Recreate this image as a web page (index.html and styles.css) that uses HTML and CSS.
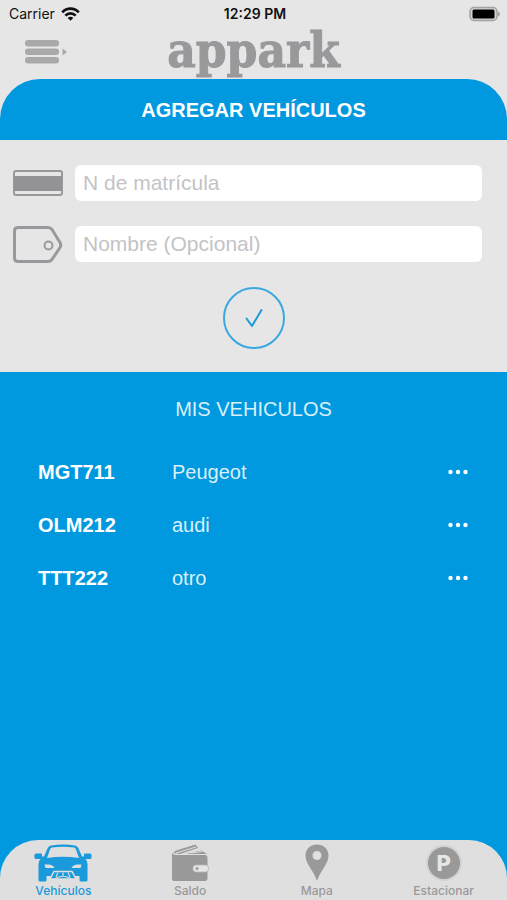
FILE: index.html
```html
<!DOCTYPE html>
<html lang="es">
<head>
  <meta charset="UTF-8" />
  <meta name="viewport" content="width=device-width, initial-scale=1" />
  <title>appark - Vehículos</title>
  <link rel="stylesheet" href="styles.css">
</head>
<body>
  <!-- Status bar -->
  <div class="status-bar">
    <div class="carrier">
      <span>Carrier</span>
      <svg width="19" height="14" viewBox="0 0 19 14" fill="none" stroke="#111" stroke-width="2.6">
        <path d="M1.2 5.3C6 .4 13 .4 17.8 5.3" />
        <path d="M4.3 8.6C7.3 5.6 11.7 5.6 14.7 8.6" />
        <path d="M9.5 13.8L6.7 11C8.3 9.4 10.7 9.4 12.3 11Z" fill="#111" stroke="none" />
      </svg>
    </div>
    <div class="time">12:29 PM</div>
    <div class="battery">
      <svg width="32" height="16" viewBox="0 0 32 16">
        <rect x="1" y="1.5" width="27" height="13" rx="4" fill="#d2d2d2" stroke="#a2a2a2" stroke-width="1.5" />
        <rect x="3.5" y="3.5" width="22" height="9" rx="1.5" fill="#000" />
        <path d="M29 5.5C31.6 6.5 31.6 9.5 29 10.5Z" fill="#a2a2a2" />
      </svg>
    </div>
  </div>

  <header class="nav">
    <button type="button" class="menu-btn" aria-label="Menú">
      <svg width="43" height="26" viewBox="0 0 43 26" fill="#a9a9a9">
        <rect x="0" y="1" width="34" height="6.5" rx="3" />
        <rect x="0" y="9.5" width="34" height="6.5" rx="3" />
        <rect x="0" y="18" width="34" height="6.5" rx="3" />
        <path d="M37.5 9.5L42 13L37.5 16.5Z" />
      </svg>
    </button>
    <h1 class="logo">appark</h1>
  </header>

  <main>
    <h2 class="title">AGREGAR VEHÍCULOS</h2>

    <!-- Add vehicle form -->
    <form class="add-form">
      <div class="field">
        <label for="plate" aria-label="N de matrícula">
          <svg width="50" height="38" viewBox="0 0 50 38">
            <rect x="1" y="7" width="48" height="24" rx="2" fill="#e6e6e6" stroke="#99999d" stroke-width="2" />
            <rect x="1" y="12" width="48" height="15" fill="#929297" />
          </svg>
        </label>
        <input type="text" id="plate" placeholder="N de matrícula" />
      </div>
      <div class="field">
        <label for="name" aria-label="Nombre">
          <svg width="50" height="38" viewBox="0 0 50 38" fill="none" stroke="#99999d">
            <path d="M5 2.5H35Q37.5 2.5 39 4.5L47 17.500Q48.5 20 47 22.500L39 34.500Q37.5 36.500 35 36.500H5Q1.5 36.500 1.5 33V6Q1.5 2.500 5 2.500Z" stroke-width="3" />
            <circle cx="35.5" cy="20.5" r="4" stroke-width="2" />
          </svg>
        </label>
        <input type="text" id="name" placeholder="Nombre (Opcional)" />
      </div>
      <button type="submit" class="confirm-btn" aria-label="Agregar">
        <svg width="18" height="20" viewBox="0 0 18 20" fill="none" stroke="#1a9bdc" stroke-width="2" stroke-linecap="round" stroke-linejoin="round">
          <path d="M1.5 10.5L7 18L16.5 2" />
        </svg>
      </button>
    </form>

    <!-- Vehicle list -->
    <section class="vehicles">
      <h2>MIS VEHICULOS</h2>
      <table>
        <tr>
          <th scope="row">MGT711</th>
          <td>Peugeot</td>
          <td class="actions">
            <button type="button" aria-label="Opciones MGT711">
              <svg width="20" height="6" viewBox="0 0 20 6" fill="#fff"><circle cx="2.5" cy="3" r="2.2" /><circle cx="10" cy="3" r="2.2" /><circle cx="17.5" cy="3" r="2.2" /></svg>
            </button>
          </td>
        </tr>
        <tr>
          <th scope="row">OLM212</th>
          <td>audi</td>
          <td class="actions">
            <button type="button" aria-label="Opciones OLM212">
              <svg width="20" height="6" viewBox="0 0 20 6" fill="#fff"><circle cx="2.5" cy="3" r="2.2" /><circle cx="10" cy="3" r="2.2" /><circle cx="17.5" cy="3" r="2.2" /></svg>
            </button>
          </td>
        </tr>
        <tr>
          <th scope="row">TTT222</th>
          <td>otro</td>
          <td class="actions">
            <button type="button" aria-label="Opciones TTT222">
              <svg width="20" height="6" viewBox="0 0 20 6" fill="#fff"><circle cx="2.5" cy="3" r="2.2" /><circle cx="10" cy="3" r="2.2" /><circle cx="17.5" cy="3" r="2.2" /></svg>
            </button>
          </td>
        </tr>
      </table>
    </section>
  </main>

  <!-- Bottom tabs -->
  <nav class="tabs">
    <a href="#vehiculos" class="active">
      <svg width="58" height="38" viewBox="0 0 58 38" fill="currentColor">
        <path fill-rule="evenodd" d="M17 1.5Q29 -.5 41 1.5Q43.5 2 44.5 4.5L48 12.5H50V10.5Q50 9.5 51 9.5H56Q57.5 9.5 57.5 11V13.5Q57.5 15 56 15H51.5Q53.5 17 53.5 20V36Q53.5 37.5 52 37.5H47Q45.5 37.5 45.5 36V32H12.5V36Q12.5 37.5 11 37.5H6Q4.5 37.5 4.5 36V20Q4.5 17 6.5 15H2Q.5 15 .5 13.5V11Q.5 9.5 2 9.5H7Q8 9.5 8 10.5V12.5H10L13.5 4.5Q14.5 2 17 1.5ZM18 3.5Q16.5 4 16 5.5L13 14Q29 11.5 45 14L42 5.5Q41.5 4 40 3.5Q29 2 18 3.5ZM10.5 20.5L11.5 24H20.5Q19.5 21 15 20.5ZM47.5 20.5L46.5 24H37.5Q38.5 21 43 20.5Z" />
        <path d="M16 35L20 27.5H38L42 35Z" stroke="#dfdfdf" stroke-width="1.5" />
        <path d="M24 28.5L22 33M29 28.5V32M34 28.5L36 33M20 35.5Q29 29 38 35.5" fill="none" stroke="#dfdfdf" stroke-width="1.2" />
      </svg>
      Vehículos
    </a>
    <a href="#saldo">
      <svg width="38" height="38" viewBox="0 0 38 38" fill="currentColor">
        <path d="M2 9L5 6.5L24.5 .5L27 4L9 10Z" />
        <path d="M5 9L25 3" stroke="#dfdfdf" stroke-width="1" />
        <path d="M15 10L30 6.5L36 10Z" />
        <path d="M20 9L31 7.5" stroke="#dfdfdf" stroke-width="1" />
        <path d="M1 9Q2 11 5 11H34Q36.5 11 36.5 14V34Q36.5 37 34 37H3Q1 37 1 35Z" />
        <rect x="22" y="21" width="15.5" height="7" rx="3" fill="#e5e5e5" stroke="#b8b8b8" stroke-width=".8" />
        <circle cx="26" cy="24.5" r="1.5" />
      </svg>
      Saldo
    </a>
    <a href="#mapa">
      <svg width="24" height="38" viewBox="0 0 24 38" fill="currentColor">
        <path fill-rule="evenodd" d="M12 .5C5.5 .5 .5 5 .5 11.5C.5 20 9 27 12 37C15 27 23.5 20 23.5 11.5C23.5 5 18.5 .5 12 .5ZM12 7A4.5 4.5 0 1 1 12 16A4.5 4.5 0 1 1 12 7Z" />
      </svg>
      Mapa
    </a>
    <a href="#estacionar">
      <span class="parking">P</span>
      Estacionar
    </a>
  </nav>
</body>
</html>
```
FILE: styles.css
```css
* {
  margin: 0;
  padding: 0;
  box-sizing: border-box;
}

body {
  background-color: #e6e6e6;
  display: flex;
  flex-direction: column;
  min-height: 100vh;
  font-family: "Liberation Sans", Arial, sans-serif;
}

svg {
  display: block;
}

button {
  border: none;
  background: none;
  cursor: pointer;
}

.status-bar {
  display: grid;
  grid-template-columns: 1fr auto 1fr;
  align-items: center;
  height: 27px;
  padding: 0 6px 0 9px;
  font-family: Inter, sans-serif;
  font-size: 14px;
  color: #111;
}

.carrier {
  display: flex;
  align-items: center;
  gap: 6px;
}

.time {
  font-weight: 600;
}

.battery {
  justify-self: end;
}

.nav {
  display: grid;
  grid-template-columns: 1fr auto 1fr;
  align-items: center;
  height: 52px;
  padding: 0 25px 2px;
}

.menu-btn {
  justify-self: start;
}

.logo {
  margin-bottom: 4px;
  font-family: "DejaVu Serif Condensed", "DejaVu Serif", serif;
  font-size: 49px;
  line-height: 46px;
  font-weight: bold;
  color: #99999c;
  -webkit-text-stroke: 1px #99999c;
}

main {
  flex: 1;
  display: flex;
  flex-direction: column;
}

.title {
  background-color: #0098df;
  color: white;
  border-radius: 40px 40px 0 0;
  padding: 21px 20px 19px;
  font-size: 20px;
  line-height: 21px;
  text-align: center;
}

/* Add vehicle form */
.add-form {
  display: flex;
  flex-direction: column;
  gap: 25px;
  padding: 25px 25px 23px 13px;
}

.field {
  display: flex;
  align-items: center;
  gap: 12px;
  height: 36px;
}

.field input {
  flex: 1;
  min-width: 0;
  height: 36px;
  padding: 0 8px;
  border: none;
  border-radius: 6px;
  background-color: white;
  font-family: inherit;
  font-size: 21px;
  color: #333;
}

.field input::placeholder {
  color: #c3c3c5;
}

.confirm-btn {
  display: flex;
  align-items: center;
  justify-content: center;
  align-self: center;
  width: 62px;
  height: 62px;
  margin-left: 12px;
  border: 2px solid #3aa8de;
  border-radius: 50%;
}

/* Vehicle list */
.vehicles {
  flex: 1;
  background-color: #0098df;
  padding: 24px 29px 60px 38px;
  color: white;
}

.vehicles h2 {
  margin-right: 9px;
  margin-bottom: 24px;
  text-align: center;
  font-size: 20px;
  line-height: 26px;
  font-weight: normal;
  color: #d9f0fb;
}

.vehicles table {
  width: 100%;
  border-collapse: collapse;
  font-size: 20px;
}

.vehicles tr {
  height: 53px;
}

.vehicles th {
  width: 134px;
  text-align: left;
}

.vehicles td {
  color: #d9f0fb;
}

.actions button {
  display: block;
  margin-left: auto;
  padding: 9px 10px 11px;
}

/* Bottom tabs */
.tabs {
  display: flex;
  height: 60px;
  margin-top: -60px;
  padding-top: 4px;
  border-radius: 38px 38px 0 0;
  background-color: #dfdfdf;
}

.tabs a {
  flex: 1;
  display: flex;
  flex-direction: column;
  align-items: center;
  font-family: Inter, sans-serif;
  font-size: 12px;
  line-height: 18px;
  font-weight: 500;
  color: #999;
  text-decoration: none;
}

.tabs a.active {
  color: #1b9adb;
}

.parking {
  width: 32px;
  height: 32px;
  margin: 3px 0;
  border-radius: 50%;
  background-color: #999;
  box-shadow: 0 0 0 2px #d2d2d2;
  color: #e6e6e6;
  font-size: 22px;
  line-height: 32px;
  font-weight: 800;
  text-align: center;
}
```
